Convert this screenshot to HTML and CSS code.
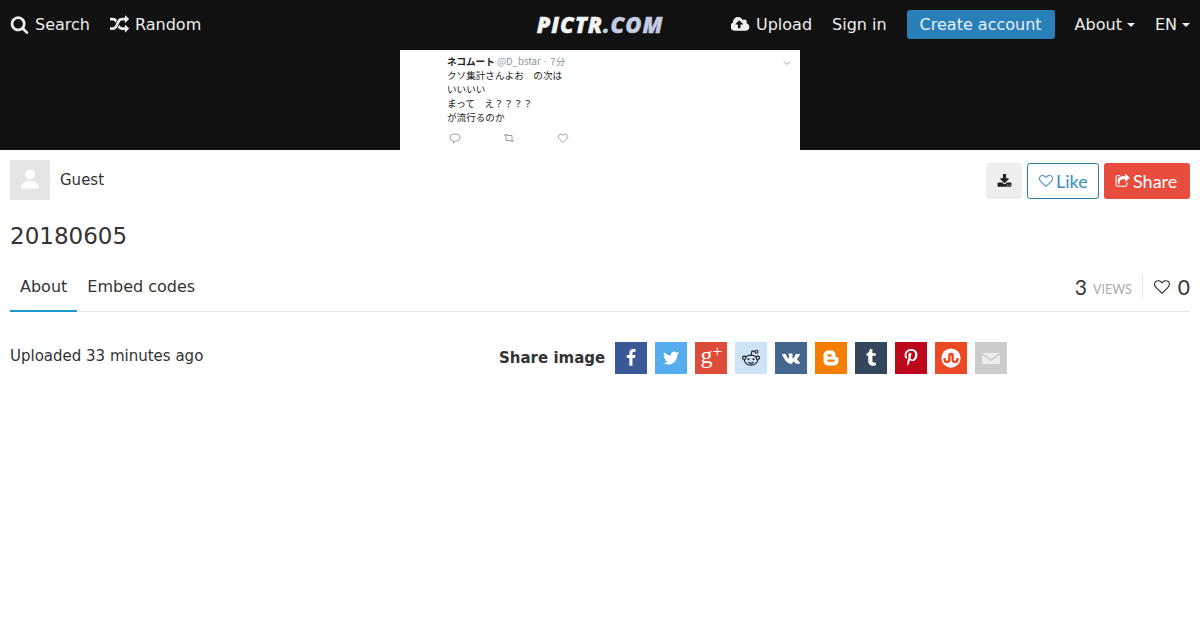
FILE: index.html
```html
<!DOCTYPE html>
<html lang="en">
<head>
    <meta charset="UTF-8">
    <title>20180605 - PICTR.COM</title>
    <link rel="stylesheet" href="styles.css">
</head>
<body>
<nav class="topbar">
    <div class="nav-left">
        <a class="nav-item" href="#"><svg class="nav-icon" viewBox="0 0 1792 1792"><path d="M1216 832q0-185-131.5-316.5t-316.5-131.5-316.5 131.5-131.5 316.5 131.5 316.5 316.5 131.5 316.5-131.5 131.5-316.5zm512 832q0 52-38 90t-90 38q-54 0-90-38l-343-342q-179 124-399 124-143 0-273.5-55.5t-225-150-150-225-55.5-273.5 55.5-273.5 150-225 225-150 273.5-55.5 273.5 55.5 225 150 150 225 55.5 273.5q0 220-124 399l343 343q37 37 37 90z"/></svg>Search</a>
        <a class="nav-item" href="#"><svg class="nav-icon" viewBox="0 0 1792 1792"><path d="M666 481q-60 92-137 273-22-45-37-72.5t-40.5-63.5-51-56.5-63-35-81.5-14.5h-224q-14 0-23-9t-9-23v-192q0-14 9-23t23-9h224q250 0 410 225zm1126 799q0 14-9 23l-320 320q-9 9-23 9-13 0-22.5-9.5t-9.5-22.5v-192q-32 0-85 .5t-81 1-73-1-71-5-64-10.5-63-18.5-58-28.5-59-40-55-53.5-56-69.5q59-93 136-273 22 45 37 72.5t40.5 63.5 51 56.5 63 35 81.5 14.5h256v-192q0-14 9-23t23-9q12 0 24 10l319 319q9 9 9 23zm0-896q0 14-9 23l-320 320q-9 9-23 9-13 0-22.5-9.5t-9.5-22.5v-192h-256q-48 0-87 15t-69 45-51 61.5-45 77.5q-32 62-78 171-29 66-49.5 111t-54 105-64 100-74 83-90 68.5-106.5 42-128 16.5h-224q-14 0-23-9t-9-23v-192q0-14 9-23t23-9h224q48 0 87-15t69-45 51-61.5 45-77.5q32-62 78-171 29-66 49.5-111t54-105 64-100 74-83 90-68.5 106.5-42 128-16.5h256v-192q0-14 9-23t23-9q12 0 24 10l319 319q9 9 9 23z"/></svg>Random</a>
    </div>
    <a class="logo" href="#">PICTR<span class="logo-dim">.COM</span></a>
    <div class="nav-right">
        <a class="nav-item" href="#"><svg class="nav-icon upload-icon" viewBox="0 0 1920 1792"><path d="M1216 864q0-14-9-23l-352-352q-9-9-23-9t-23 9l-351 351q-10 12-10 24 0 14 9 23t23 9h224v352q0 13 9.5 22.5t22.5 9.5h192q13 0 22.5-9.5t9.5-22.5v-352h224q13 0 22.5-9.5t9.5-22.5zm640 288q0 159-112.5 271.5t-271.5 112.5h-1088q-185 0-316.5-131.5t-131.5-316.5q0-130 70-240t188-165q-2-30-2-43 0-212 150-362t362-150q156 0 285.5 87t188.5 231q71-62 166-62 106 0 181 75t75 181q0 76-41 138 130 31 213.5 135.5t83.5 238.5z"/></svg>Upload</a>
        <a class="nav-item" href="#">Sign in</a>
        <a class="btn-create" href="#">Create account</a>
        <a class="nav-item" href="#">About<span class="caret"></span></a>
        <a class="nav-item" href="#">EN<span class="caret"></span></a>
    </div>
</nav>

<div class="hero">
    <div class="tweet">
        <svg class="tweet-chevron" viewBox="0 0 10 10"><path d="M2 3.500 5 6.500 8 3.500"/></svg>
        <div class="tweet-head"><b>ネコムート</b> <span class="tweet-handle">@D_bstar · 7分</span></div>
        <div>クソ集計さんよお　の次は</div>
        <div>いいいい</div>
        <div>まって　え？？？？</div>
        <div>が流行るのか</div>
        <div class="tweet-actions">
            <svg viewBox="0 0 12 12"><path d="M4.500 2h3a3.500 3.500 0 0 1 0 7H7L4.500 11V9A3.500 3.500 0 0 1 4.500 2z"/></svg>
            <svg viewBox="0 0 12 12"><path d="M1 4 3 2 5 4M3 2V8.500H7M11 8 9 10 7 8M9 10V3.500H5"/></svg>
            <svg viewBox="0 0 12 12"><path d="M6 10.500 1.800 6.200A2.500 2.500 0 0 1 6 3.200 2.500 2.500 0 0 1 10.200 6.200z"/></svg>
        </div>
    </div>
</div>

<main class="content">
    <div class="meta-row">
        <div class="owner">
            <div class="avatar"><svg viewBox="0 0 40 40"><circle cx="20" cy="14.500" r="5"/><path d="M11 28.500c0-4 2-6 6.500-7.500h5c4.500 1.500 6.500 3.500 6.500 7.500z"/></svg></div>
            <span>Guest</span>
        </div>
        <div class="actions">
            <a class="btn btn-download" href="#"><svg viewBox="0 0 1792 1792"><path d="M1344 1344q0-26-19-45t-45-19-45 19-19 45 19 45 45 19 45-19 19-45zm256 0q0-26-19-45t-45-19-45 19-19 45 19 45 45 19 45-19 19-45zm128-224v320q0 40-28 68t-68 28h-1472q-40 0-68-28t-28-68v-320q0-40 28-68t68-28h465l135 136q58 56 136 56t136-56l136-136h464q40 0 68 28t28 68zm-325-569q17 41-14 70l-448 448q-18 19-45 19t-45-19l-448-448q-31-29-14-70 17-39 59-39h256v-448q0-26 19-45t45-19h256q26 0 45 19t19 45v448h256q42 0 59 39z"/></svg></a>
            <a class="btn btn-like" href="#"><svg viewBox="0 0 1792 1792"><path d="M1664 596q0-81-21.500-143t-55-98.500-81.500-59.500-94-31-98-8-112 25.500-110.500 64-86.500 72-60 61.500q-18 22-49 22t-49-22q-24-28-60-61.500t-86.500-72-110.500-64-112-25.500-98 8-94 31-81.500 59.500-55 98.500-21.500 143q0 168 187 355l581 560 580-559q188-188 188-356zm128 0q0 221-229 450l-623 600q-18 18-44 18t-44-18l-624-602q-10-8-27.500-26t-55.500-65.500-68-97.500-53.500-121-23.500-138q0-220 127-344t351-124q62 0 126.500 21.500t120 58 95.500 68.500 76 68q36-36 76-68t95.500-68.500 120-58 126.500-21.500q224 0 351 124t127 344z"/></svg>Like</a>
            <a class="btn btn-share" href="#"><svg viewBox="0 0 1792 1792"><path d="M1472 989v259q0 119-84.500 203.500t-203.500 84.500h-832q-119 0-203.500-84.500t-84.500-203.500v-832q0-119 84.500-203.500t203.500-84.500h255q13 0 22.500 9.500t9.500 22.500q0 27-26 32-77 26-133 60-10 4-16 4h-112q-66 0-113 47t-47 113v832q0 66 47 113t113 47h832q66 0 113-47t47-113v-214q0-19 18-29 28-13 54-37 16-16 35-8 21 9 21 29zm237-496l-384 384q-18 19-45 19-12 0-25-5-39-17-39-59v-192h-160q-323 0-438 131-119 137-74 473 3 23-20 34-8 2-12 2-16 0-26-13-10-14-21-31t-39.500-68.500-49.500-99.500-38.500-114-17.500-122q0-49 3.500-91t14-90 28-88 47-81.500 68.500-74 94.500-61.500 124.500-48.500 159.500-30.500 196.500-11h160v-192q0-42 39-59 13-5 25-5 26 0 45 19l384 384q19 19 19 45t-19 45z"/></svg>Share</a>
        </div>
    </div>

    <h1 class="title">20180605</h1>

    <div class="tabs">
        <a class="tab active" href="#">About</a>
        <a class="tab" href="#">Embed codes</a>
        <div class="stats">
            <span class="stat-num">3</span><span class="stat-label">VIEWS</span>
            <span class="stat-sep"></span>
            <svg class="stat-heart" viewBox="0 0 1792 1792"><path d="M1664 596q0-81-21.500-143t-55-98.500-81.500-59.500-94-31-98-8-112 25.500-110.500 64-86.500 72-60 61.500q-18 22-49 22t-49-22q-24-28-60-61.500t-86.500-72-110.500-64-112-25.500-98 8-94 31-81.500 59.500-55 98.500-21.500 143q0 168 187 355l581 560 580-559q188-188 188-356zm128 0q0 221-229 450l-623 600q-18 18-44 18t-44-18l-624-602q-10-8-27.500-26t-55.500-65.500-68-97.500-53.500-121-23.500-138q0-220 127-344t351-124q62 0 126.500 21.500t120 58 95.500 68.500 76 68q36-36 76-68t95.500-68.500 120-58 126.500-21.500q224 0 351 124t127 344z"/></svg>
            <span class="stat-num">0</span>
        </div>
    </div>

    <div class="about">
        <div class="uploaded">Uploaded 33 minutes ago</div>
        <div class="share-row">
            <b class="share-label">Share image</b>
            <a class="sq sq-fb" href="#"><svg viewBox="0 0 1792 1792"><path d="M1343 12v264h-157q-86 0-116 36t-30 108v189h293l-39 296h-254v759h-306v-759h-255v-296h255v-218q0-186 104-288.500t277-102.500q147 0 228 12z"/></svg></a>
            <a class="sq sq-tw" href="#"><svg viewBox="0 0 1792 1792"><path d="M1684 408q-67 98-162 167 1 14 1 42 0 130-38 259.500t-115.500 248.500-184.500 210.500-258 146-323 54.500q-271 0-496-145 35 4 78 4 225 0 401-138-105-2-188-64.500t-114-159.500q33 5 61 5 43 0 85-11-112-23-185.500-111.500t-73.500-205.500v-4q68 38 146 41-66-44-105-115t-39-154q0-88 44-163 121 149 294.500 238.500t371.500 99.500q-8-38-8-74 0-134 94.500-228.500t228.500-94.500q140 0 236 102 109-21 205-78-37 115-142 178 93-10 186-50z"/></svg></a>
            <a class="sq sq-gp" href="#">g<span class="gp-plus">+</span></a>
            <a class="sq sq-rd" href="#"><svg class="rd-icon" viewBox="0 0 24 24"><ellipse cx="12" cy="14.500" rx="8" ry="6"/><circle cx="3.800" cy="11.800" r="2"/><circle cx="20.200" cy="11.800" r="2"/><circle cx="18.500" cy="4.500" r="1.800"/><path d="M12 8.500 13.200 3.500 16.700 4.300"/><circle class="rd-dot" cx="9" cy="13.500" r="1.300"/><circle class="rd-dot" cx="15" cy="13.500" r="1.300"/><path d="M8.800 17.200c2 1.300 4.400 1.300 6.400 0"/></svg></a>
            <a class="sq sq-vk" href="#"><svg viewBox="0 0 1920 1792"><path d="M1917 485q23 64-150 294-24 32-65 85-78 100-90 131-17 41 14 81 17 21 81 82h1l1 1 1 1 2 2q141 131 191 221 3 5 6.500 12.500t7 26.500-.5 34-25 27.500-59 12.500l-256 4q-24 5-56-5t-52-22l-20-12q-30-21-70-64t-68.500-77.500-61-58-56.500-15.500q-3 1-8 3.500t-17 14.500-21.500 29.500-17 52-6.500 77.500q0 15-3.500 27.500t-7.500 18.500l-4 5q-18 19-53 22h-115q-71 4-146-16.500t-131.500-53-103-66-70.500-57.500l-25-24q-10-10-27.500-30t-71.500-91-106-151-122.500-211-130.500-272q-6-16-6-27t3-16l4-6q15-19 57-19l274-2q12 2 23 6.500t16 8.500l5 3q16 11 24 32 20 50 46 103.500t41 81.500l16 29q29 60 56 104t48.500 68.500 41.500 38.500 34 14 27-5q2-1 5-5t12-22 13.500-47 9.500-81 0-125q-2-40-9-73t-14-46l-6-12q-25-34-85-43-13-2 5-24 16-19 38-30 53-26 239-24 82 1 135 13 20 5 33.500 13.500t20.500 24 10.500 32 3.500 45.500-1 55-2.500 70.500-1.500 82.500q0 11-1 42t-.5 48 3.500 40.500 11.500 39 22.500 24.500q8 2 17 4t26-11 38-34.500 52-67 68-107.500q60-104 107-225 4-10 10-17.500t11-10.500l4-3 5-2.500 13-3 20-.5 288-2q39-5 64 2.500t31 16.500z"/></svg></a>
            <a class="sq sq-bl" href="#"><svg viewBox="0 0 24 24"><path fill-rule="evenodd" d="M8.500 2h4C16 2 18 4.500 18 8v1.500c0 .8.500 1.300 1.500 1.300 1 0 2.500.3 2.500 2.200v2.500c0 3.800-2.700 6.500-6.500 6.500h-7C4.700 22 2 19.300 2 15.500v-7C2 4.700 4.700 2 8.500 2zM8.500 7C7.700 7 7 7.700 7 8.500S7.700 10 8.500 10h3c.8 0 1.500-.7 1.500-1.500S12.300 7 11.500 7zM8.500 14c-.8 0-1.500.7-1.500 1.500S7.700 17 8.500 17h7c.8 0 1.500-.7 1.500-1.500S16.300 14 15.500 14z"/></svg></a>
            <a class="sq sq-tb" href="#"><svg viewBox="0 0 1792 1792"><path d="M1328 1329l80 237q-23 35-111 66t-177 32q-104 2-190.500-26t-142.500-74-95-106-55.500-120-16.500-118v-544h-168v-215q72-26 129-69.500t91-90 58-102 34-99 15-88.500q1-5 4.500-8.500t7.500-3.500h244v424h333v252h-334v518q0 30 6.500 56t22.500 52.500 49.500 41.500 81.500 14q78-2 134-29z"/></svg></a>
            <a class="sq sq-pt" href="#"><svg viewBox="0 0 1792 1792"><path d="M256 597q0-108 37.500-203.500t103.500-166.500 152-123 185-78 202-26q158 0 294 66.500t221 193.500 85 287q0 96-19 188t-60 177-100 149.500-145 103-189 38.500q-68 0-135-32t-96-88q-10 39-28 112.500t-23.500 95-20.500 71-26 71-32 62.500-46 77.500-62 86.500l-14 5-9-10q-15-157-15-188 0-92 21.500-206.500t66.500-287.500 52-203q-32-65-32-169 0-83 52-156t132-73q61 0 95 40.500t34 102.500q0 66-44 191t-44 187q0 63 45 104.500t109 41.500q55 0 102-25t78.500-68 56-95 38-110.500 20-111 6.500-99.500q0-173-109.500-269.500t-285.500-96.500q-200 0-334 129.500t-134 328.500q0 44 12.500 85t27 65 27 45.500 12.500 30.500q0 28-15 73t-37 45q-2 0-17-3-51-15-90.500-56t-61-94.500-32.500-108-11-106.500z"/></svg></a>
            <a class="sq sq-su" href="#"><svg class="su-icon" viewBox="0 0 24 24"><circle cx="12" cy="12" r="10.500"/><path class="su-mark" d="M5 12v1.700a2.600 2.600 0 0 0 5.200 0V9.500a1.800 1.800 0 0 1 3.600 0v4.200a2.600 2.600 0 0 0 5.200 0V12"/></svg></a>
            <a class="sq sq-em" href="#"><svg class="em-icon" viewBox="0 0 18 11"><path d="M0 0H18L9 6zM0 2 9 8 18 2V11H0z"/></svg></a>
        </div>
    </div>
</main>
</body>
</html>
```

FILE: styles.css
```css
* {
    box-sizing: border-box;
}

body {
    margin: 0;
    font-family: "DejaVu Sans", sans-serif;
    font-size: 15px;
    color: #333;
    background-color: #fff;
}

a {
    color: inherit;
    text-decoration: none;
}

/* top bar */
.topbar {
    display: grid;
    grid-template-columns: 1fr auto 1fr;
    align-items: center;
    height: 50px;
    padding-bottom: 2px;
    background-color: #111;
    color: #eee;
    font-size: 16px;
}

.nav-left, .nav-right {
    display: flex;
    align-items: center;
}

.nav-right {
    justify-content: flex-end;
}

.nav-item {
    display: flex;
    align-items: center;
    height: 48px;
    padding: 0 10px;
}

.nav-icon {
    width: 19px;
    height: 19px;
    margin-right: 6px;
    fill: #eee;
}

.logo {
    font-family: "Open Sans", sans-serif;
    font-size: 22px;
    line-height: 28px;
    font-weight: 800;
    font-style: italic;
    letter-spacing: 0.9px;
    color: #f4f4f4;
    -webkit-text-stroke: 0.4px currentColor;
}

.logo-dim {
    color: #c5cbe0;
}

.btn-create {
    height: 29px;
    margin: 1px 10px 0 10px;
    padding: 0 13px;
    line-height: 29px;
    color: #e6f0f7;
    background-color: #2980b9;
    border-radius: 3px;
}

.caret {
    width: 0;
    height: 0;
    margin-left: 5px;
    margin-top: 2px;
    border-top: 4px solid #eee;
    border-left: 4px solid transparent;
    border-right: 4px solid transparent;
}

/* picture */
.hero {
    display: flex;
    justify-content: center;
    height: 100px;
    background-color: #111;
}

.tweet {
    position: relative;
    width: 400px;
    height: 100px;
    padding: 4px 0 0 47px;
    overflow: hidden;
    font-family: "Noto Sans CJK JP", sans-serif;
    font-size: 9.6px;
    line-height: 14px;
    color: #222;
    background-color: #fff;
}

.tweet-head b {
    font-weight: 700;
}

.tweet-handle {
    color: #8a949c;
}

.tweet-chevron {
    position: absolute;
    top: 8px;
    right: 8px;
    width: 10px;
    height: 10px;
    fill: none;
    stroke: #999;
}

.tweet-actions {
    display: flex;
    gap: 42px;
    margin-top: 8px;
    margin-left: 2px;
}

.tweet-actions svg {
    width: 12px;
    height: 12px;
    fill: none;
    stroke: #7f8a93;
    stroke-width: 0.8;
}

/* owner and buttons */
.content {
    padding: 0 10px;
}

.meta-row {
    display: flex;
    justify-content: space-between;
    padding-top: 10px;
}

.owner {
    display: flex;
    align-items: center;
    gap: 10px;
    height: 40px;
    padding-bottom: 1px;
}

.avatar {
    width: 40px;
    height: 40px;
    background-color: #e5e5e5;
}

.avatar svg {
    display: block;
    fill: #fff;
}

.actions {
    display: flex;
    gap: 5px;
    padding-top: 3px;
}

.btn {
    display: flex;
    align-items: center;
    height: 36px;
    font-family: "Lato", sans-serif;
    font-size: 18px;
    border-radius: 3px;
}

.btn-download {
    justify-content: center;
    width: 36px;
    background-color: #eee;
}

.btn-download svg {
    width: 15px;
    height: 15px;
    fill: #222;
}

.btn-like {
    width: 72px;
    padding-left: 11px;
    color: #3c8dc0;
    border: 1px solid #2b7fa8;
}

.btn-like svg {
    width: 14px;
    height: 14px;
    margin-right: 3px;
    fill: #3c8dc0;
}

.btn-share {
    width: 86px;
    padding-left: 11px;
    color: #fff;
    background-color: #e74c3c;
}

.btn-share svg {
    width: 15px;
    height: 15px;
    margin-right: 3px;
    fill: #fff;
}

.title {
    margin: 23px 0 0;
    font-size: 23px;
    line-height: 27px;
    font-weight: 400;
}

/* tabs */
.tabs {
    display: flex;
    align-items: center;
    height: 50px;
    margin-top: 12px;
    font-size: 16px;
    border-bottom: 1px solid #e5e5e5;
}

.tab {
    height: 50px;
    padding: 0 10px;
    line-height: 50px;
}

.tab.active {
    border-bottom: 2px solid #1a9ac9;
}

.stats {
    display: flex;
    align-items: center;
    margin-left: auto;
    font-family: "Lato", sans-serif;
}

.stat-num {
    font-size: 21px;
}

.stat-label {
    margin-left: 6px;
    margin-top: 5px;
    font-size: 12.5px;
    color: #aaa;
}

.stat-sep {
    width: 1px;
    height: 22px;
    margin: 0 11px 0 10px;
    background-color: #e5e5e5;
}

.stat-heart {
    width: 16px;
    height: 16px;
    margin-right: 8px;
    fill: #333;
}

/* about and share */
.about {
    display: grid;
    grid-template-columns: 489px auto;
    margin-top: 30px;
}

.uploaded {
    line-height: 28px;
}

.share-row {
    display: flex;
    align-items: center;
    gap: 8px;
}

.share-label {
    margin-right: 2px;
}

.sq {
    display: flex;
    align-items: center;
    justify-content: center;
    width: 32px;
    height: 32px;
    color: #fff;
}

.sq svg {
    width: 18px;
    height: 18px;
    fill: #fff;
}

.sq-fb { background-color: #3b5998; }
.sq-tw { background-color: #55acee; }
.sq-rd { background-color: #cee3f8; }
.sq-vk { background-color: #45668e; }
.sq-bl { background-color: #f57d00; }
.sq-tb { background-color: #35465c; }
.sq-pt { background-color: #bd081c; }
.sq-su { background-color: #eb4924; }
.sq-em { background-color: #ccc; }

.sq-gp {
    padding-bottom: 5px;
    font-family: "Liberation Serif", serif;
    font-size: 24px;
    background-color: #dd4b39;
}

.gp-plus {
    margin-bottom: 7px;
    font-size: 17px;
}

.sq .rd-icon {
    width: 20px;
    height: 20px;
    fill: #cee3f8;
    stroke: #222;
    stroke-width: 1.4;
}

.sq .rd-icon .rd-dot {
    fill: #222;
    stroke: none;
}

.rd-icon path {
    fill: none;
}

.sq .su-icon {
    width: 22px;
    height: 22px;
}

.su-mark {
    fill: none;
    stroke: #eb4924;
    stroke-width: 2.6;
}

.sq .em-icon {
    height: 11px;
    fill: #ececec;
}
```
